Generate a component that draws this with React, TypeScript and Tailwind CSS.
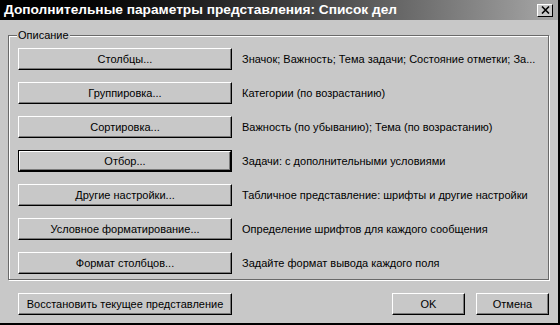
import type { ReactNode } from 'react'

const rows: { label: string; value: string; isDefault?: boolean }[] = [
  { label: 'Столбцы...', value: 'Значок; Важность; Тема задачи; Состояние отметки; За...' },
  { label: 'Группировка...', value: 'Категории (по возрастанию)' },
  { label: 'Сортировка...', value: 'Важность (по убыванию); Тема (по возрастанию)' },
  { label: 'Отбор...', value: 'Задачи: с дополнительными условиями', isDefault: true },
  { label: 'Другие настройки...', value: 'Табличное представление: шрифты и другие настройки' },
  { label: 'Условное форматирование...', value: 'Определение шрифтов для каждого сообщения' },
  { label: 'Формат столбцов...', value: 'Задайте формат вывода каждого поля' },
]

function Btn({ children, className = '', isDefault = false }: { children: ReactNode; className?: string; isDefault?: boolean }) {
  const face = (
    <div className="flex h-full w-full items-center justify-center border border-t-white border-l-white border-r-black border-b-black bg-[#c8c8c8] shadow-[inset_-1px_-1px_0_#7a7a7a]">
      {children}
    </div>
  )
  if (isDefault) {
    return <div className={'h-[22px] border border-black ' + className}>{face}</div>
  }
  return <div className={'h-[22px] ' + className}>{face}</div>
}

export default function App() {
  return (
    <div
      className="flex h-[325px] w-[560px] flex-col border-b-2 border-r-2 border-b-black border-r-black bg-[#c8c8c8] text-[11px] text-black"
      style={{ fontFamily: '"Liberation Sans", Arial, sans-serif' }}
    >
      {/* Title bar */}
      <div className="flex h-[20px] shrink-0 items-center justify-between bg-gradient-to-r from-black via-[#3a3a3a] to-[#a8a8a8] pl-[4px] pr-[5px]">
        <span className="text-[13.7px] font-bold text-white">Дополнительные параметры представления: Список дел</span>
        <div className="flex h-[13px] w-[16px] items-center justify-center border border-t-white border-l-white border-r-black border-b-black bg-[#c8c8c8]">
          <svg width="9" height="8" viewBox="0 0 9 8">
            <path d="M1 0.5 L8 7.5 M8 0.5 L1 7.5" stroke="black" strokeWidth="1.6" />
          </svg>
        </div>
      </div>

      {/* Body */}
      <div className="flex flex-1 flex-col px-[8px] pt-[10px]">
        <div className="relative mt-[5px] mr-[1px] border border-[#6a6a6a] px-[9px] pt-[12px] pb-[5px] shadow-[inset_1px_1px_0_white,1px_1px_0_white]">
          <span className="absolute left-[8px] top-[-8px] bg-[#c8c8c8] px-[1px] leading-[14px]">Описание</span>
          <div className="flex flex-col gap-[12px]">
            {rows.map((r) => (
              <div key={r.label} className="flex items-center gap-[10px]">
                <Btn className="w-[214px] shrink-0" isDefault={r.isDefault}>
                  {r.label}
                </Btn>
                <span className="whitespace-nowrap">{r.value}</span>
              </div>
            ))}
          </div>
        </div>

        <div className="mt-[13px] flex items-center pl-[10px] pr-[1px]">
          <Btn className="w-[214px]">Восстановить текущее представление</Btn>
          <div className="flex-1" />
          <Btn className="w-[73px]">OK</Btn>
          <Btn className="ml-[11px] w-[73px]">Отмена</Btn>
        </div>
      </div>
    </div>
  )
}
